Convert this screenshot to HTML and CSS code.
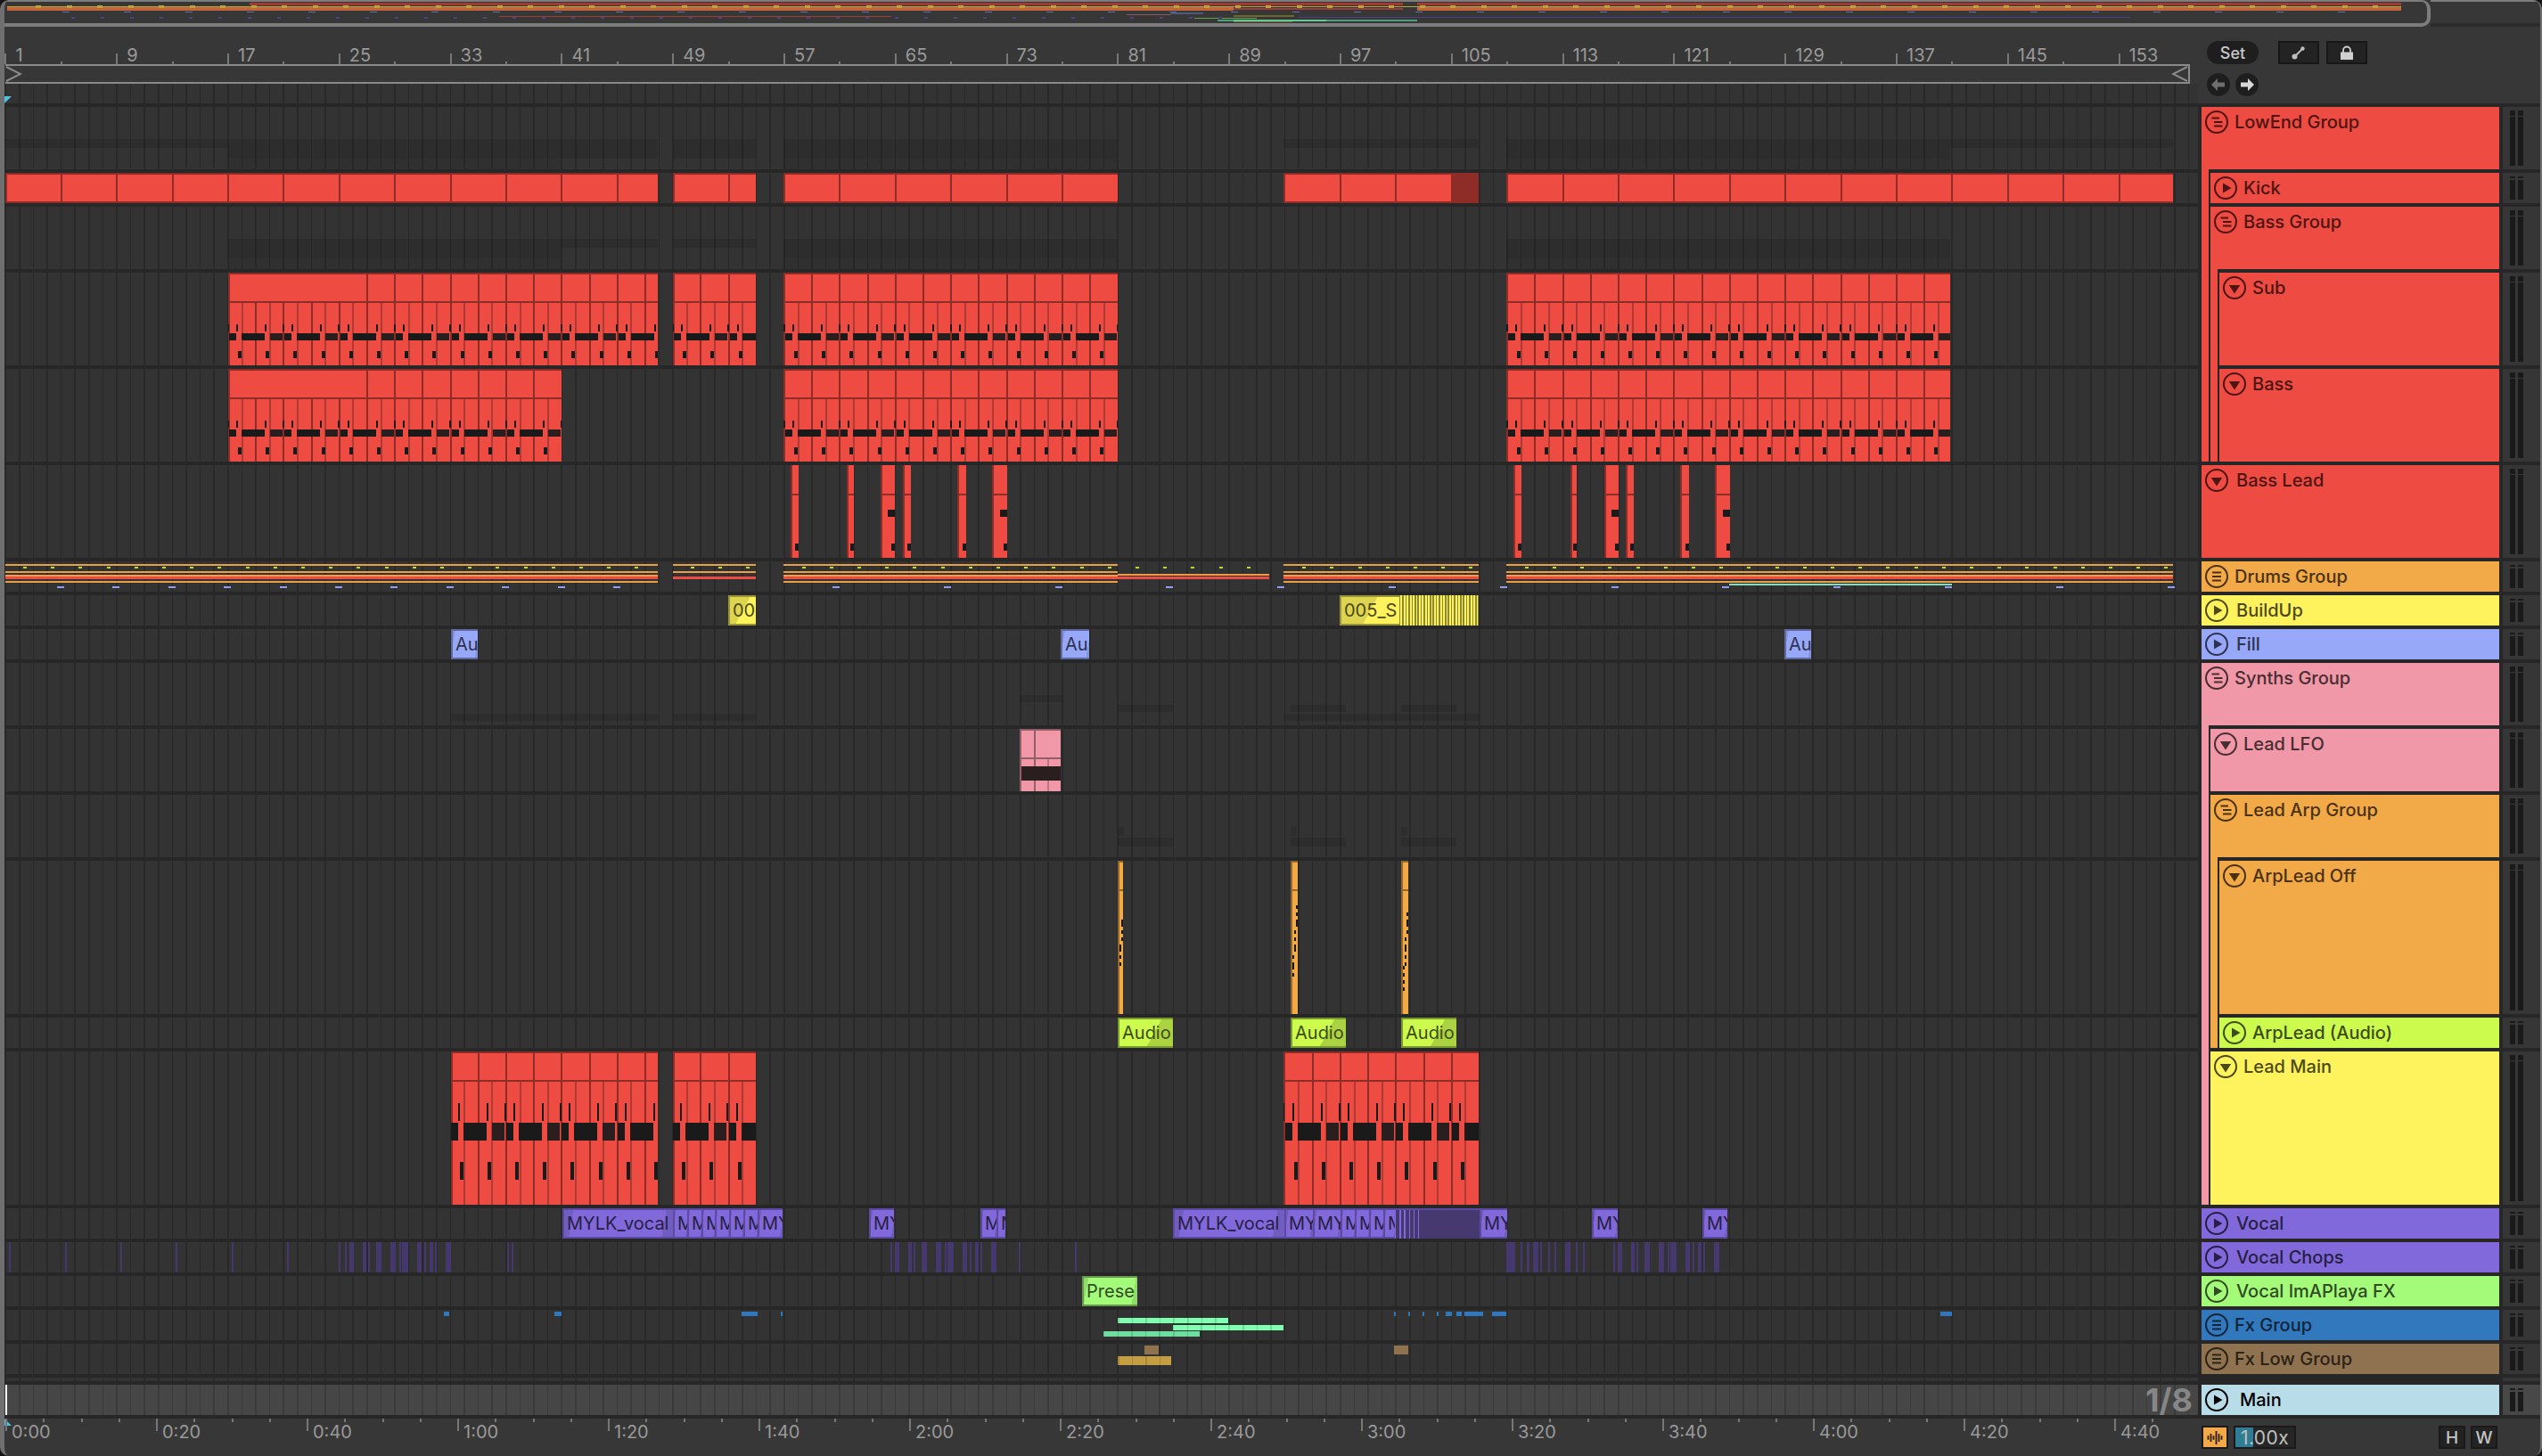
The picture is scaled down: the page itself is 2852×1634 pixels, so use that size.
FILE: index.html
```html
<!DOCTYPE html>
<html lang="en">
<head>
    <meta charset="UTF-8">
    <title>Arrangement</title>
    <link rel="stylesheet" href="styles.css">
</head>
<body>
    <svg class="defs" width="0" height="0">
        <symbol id="i-play" viewBox="0 0 26 26"><circle cx="13" cy="13" r="12" fill="none" stroke="currentColor" stroke-width="2"/><path d="M10 7.5 L19.5 13 L10 18.5 Z" fill="currentColor"/></symbol>
        <symbol id="i-down" viewBox="0 0 26 26"><circle cx="13" cy="13" r="12" fill="none" stroke="currentColor" stroke-width="2"/><path d="M6.8 10 H19.2 L13 19.5 Z" fill="currentColor"/></symbol>
        <symbol id="i-open" viewBox="0 0 26 26"><circle cx="13" cy="13" r="12" fill="none" stroke="currentColor" stroke-width="2"/><path d="M7.5 8.6 H16 M10 13 H19.5 M10 17.4 H19.5" stroke="currentColor" stroke-width="2" fill="none"/></symbol>
        <symbol id="i-fold" viewBox="0 0 26 26"><circle cx="13" cy="13" r="12" fill="none" stroke="currentColor" stroke-width="2"/><path d="M8 8.6 H18 M8 13 H18 M8 17.4 H18" stroke="currentColor" stroke-width="2" fill="none"/></symbol>
    </svg>

    <div class="app">
        <div class="overview" id="overview">
            <div class="viewport"></div>
            <div class="overview-rest"></div>
        </div>

        <div class="top">
            <div class="time-col">
                <div class="ruler" id="ruler"></div>
                <div class="locators">
                    <svg class="brace" width="19" height="18" viewBox="0 0 19 18"><path d="M1 1 L17 9 L1 17" fill="none" stroke="#8a8a8a" stroke-width="2"/></svg>
                    <svg class="brace" width="19" height="18" viewBox="0 0 19 18"><path d="M18 1 L2 9 L18 17" fill="none" stroke="#8a8a8a" stroke-width="2"/></svg>
                </div>
                <div class="lane marker"><div class="start-flag"></div></div>
            </div>
            <div class="controls">
                <div class="ctl-row">
                    <button class="pill">Set</button>
                    <div class="squares">
                        <button class="square"><svg width="16" height="16" viewBox="0 0 16 16"><path d="M3 13 L13 3" stroke="#bdbdbd" stroke-width="2"/><circle cx="3.5" cy="12.5" r="3" fill="#bdbdbd"/><circle cx="12.5" cy="3.5" r="2.2" fill="#bdbdbd"/></svg></button>
                        <button class="square"><svg width="16" height="16" viewBox="0 0 16 16"><path d="M4 8 V5.5 a4 4 0 0 1 8 0 V8" fill="none" stroke="#d0d0d0" stroke-width="1.8"/><rect x="1" y="7.5" width="14" height="8.5" fill="#d0d0d0"/></svg></button>
                    </div>
                </div>
                <div class="ctl-row arrows">
                    <button class="round"><svg width="16" height="14" viewBox="0 0 16 14"><path d="M7 0 L0 7 L7 14 V9.5 H15 V4.5 H7 Z" fill="#6e6e6e"/></svg></button>
                    <button class="round"><svg width="16" height="14" viewBox="0 0 16 14"><path d="M9 0 L16 7 L9 14 V9.5 H1 V4.5 H9 Z" fill="#d8d8d8"/></svg></button>
                </div>
            </div>
        </div>

        <div class="tracks">
            <div class="row h70">
                <div class="lane" data-l="lowend"></div>
                <div class="head"><div class="body c-red"><svg class="ic"><use href="#i-open"/></svg><span class="name">LowEnd Group</span></div></div>
                <div class="meter tall"><i></i><i></i></div>
            </div>
            <div class="row h34">
                <div class="lane" data-l="kick"></div>
                <div class="head"><b class="strip c-red"></b><div class="body c-red"><svg class="ic"><use href="#i-play"/></svg><span class="name">Kick</span></div></div>
                <div class="meter"><i></i><i></i></div>
            </div>
            <div class="row h70">
                <div class="lane" data-l="bassgroup"></div>
                <div class="head"><b class="strip c-red"></b><div class="body c-red"><svg class="ic"><use href="#i-open"/></svg><span class="name">Bass Group</span></div></div>
                <div class="meter tall"><i></i><i></i></div>
            </div>
            <div class="row h104">
                <div class="lane" data-l="sub"></div>
                <div class="head"><b class="strip c-red"></b><b class="strip c-red"></b><div class="body c-red"><svg class="ic"><use href="#i-down"/></svg><span class="name">Sub</span></div></div>
                <div class="meter tall"><i></i><i></i></div>
            </div>
            <div class="row h104">
                <div class="lane" data-l="bass"></div>
                <div class="head"><b class="strip c-red"></b><b class="strip c-red"></b><div class="body c-red"><svg class="ic"><use href="#i-down"/></svg><span class="name">Bass</span></div></div>
                <div class="meter tall"><i></i><i></i></div>
            </div>
            <div class="row h104">
                <div class="lane" data-l="basslead"></div>
                <div class="head"><div class="body c-red"><svg class="ic"><use href="#i-down"/></svg><span class="name wide">Bass Lead</span></div></div>
                <div class="meter tall"><i></i><i></i></div>
            </div>
            <div class="row h34">
                <div class="lane" data-l="drums"></div>
                <div class="head"><div class="body c-orange"><svg class="ic"><use href="#i-fold"/></svg><span class="name">Drums Group</span></div></div>
                <div class="meter"><i></i><i></i></div>
            </div>
            <div class="row h34">
                <div class="lane" data-l="buildup"></div>
                <div class="head"><div class="body c-yellow"><svg class="ic"><use href="#i-play"/></svg><span class="name wide">BuildUp</span></div></div>
                <div class="meter"><i></i><i></i></div>
            </div>
            <div class="row h34">
                <div class="lane" data-l="fill"></div>
                <div class="head"><div class="body c-peri"><svg class="ic"><use href="#i-play"/></svg><span class="name wide">Fill</span></div></div>
                <div class="meter"><i></i><i></i></div>
            </div>
            <div class="row h70">
                <div class="lane" data-l="synths"></div>
                <div class="head"><div class="body c-pink"><svg class="ic"><use href="#i-open"/></svg><span class="name">Synths Group</span></div></div>
                <div class="meter tall"><i></i><i></i></div>
            </div>
            <div class="row h70">
                <div class="lane" data-l="leadlfo"></div>
                <div class="head"><b class="strip c-pink"></b><div class="body c-pink"><svg class="ic"><use href="#i-down"/></svg><span class="name">Lead LFO</span></div></div>
                <div class="meter tall"><i></i><i></i></div>
            </div>
            <div class="row h70">
                <div class="lane" data-l="leadarp"></div>
                <div class="head"><b class="strip c-pink"></b><div class="body c-orange"><svg class="ic"><use href="#i-open"/></svg><span class="name">Lead Arp Group</span></div></div>
                <div class="meter tall"><i></i><i></i></div>
            </div>
            <div class="row h172">
                <div class="lane" data-l="arpoff"></div>
                <div class="head"><b class="strip c-pink"></b><b class="strip c-orange"></b><div class="body c-orange"><svg class="ic"><use href="#i-down"/></svg><span class="name">ArpLead Off</span></div></div>
                <div class="meter tall"><i></i><i></i></div>
            </div>
            <div class="row h34">
                <div class="lane" data-l="arpaudio"></div>
                <div class="head"><b class="strip c-pink"></b><b class="strip c-orange"></b><div class="body c-lime"><svg class="ic"><use href="#i-play"/></svg><span class="name">ArpLead (Audio)</span></div></div>
                <div class="meter"><i></i><i></i></div>
            </div>
            <div class="row h172">
                <div class="lane" data-l="leadmain"></div>
                <div class="head"><b class="strip c-pink"></b><div class="body c-yellow"><svg class="ic"><use href="#i-down"/></svg><span class="name">Lead Main</span></div></div>
                <div class="meter tall"><i></i><i></i></div>
            </div>
            <div class="row h34">
                <div class="lane" data-l="vocal"></div>
                <div class="head"><div class="body c-purple"><svg class="ic"><use href="#i-play"/></svg><span class="name wide">Vocal</span></div></div>
                <div class="meter"><i></i><i></i></div>
            </div>
            <div class="row h34">
                <div class="lane" data-l="chops"></div>
                <div class="head"><div class="body c-purple"><svg class="ic"><use href="#i-play"/></svg><span class="name wide">Vocal Chops</span></div></div>
                <div class="meter"><i></i><i></i></div>
            </div>
            <div class="row h34">
                <div class="lane" data-l="imaplaya"></div>
                <div class="head"><div class="body c-green"><svg class="ic"><use href="#i-play"/></svg><span class="name wide">Vocal ImAPlaya FX</span></div></div>
                <div class="meter"><i></i><i></i></div>
            </div>
            <div class="row h34">
                <div class="lane" data-l="fx"></div>
                <div class="head"><div class="body c-blue"><svg class="ic"><use href="#i-fold"/></svg><span class="name">Fx Group</span></div></div>
                <div class="meter"><i></i><i></i></div>
            </div>
            <div class="row h34">
                <div class="lane" data-l="fxlow"></div>
                <div class="head"><div class="body c-brown"><svg class="ic"><use href="#i-fold"/></svg><span class="name">Fx Low Group</span></div></div>
                <div class="meter"><i></i><i></i></div>
            </div>
            <div class="row drop">
                <div class="lane"></div>
                <div class="head"></div>
                <div class="meter blank"></div>
            </div>
            <div class="row h34 main-row">
                <div class="lane main-lane"><div class="playhead"></div><span class="grid-size">1/8</span></div>
                <div class="head"><div class="body c-main"><svg class="ic"><use href="#i-play"/></svg><span class="name widest">Main</span></div></div>
                <div class="meter"><i></i><i></i></div>
            </div>
        </div>

        <div class="bottom">
            <div class="time-ruler" id="time-ruler"><div class="end-flag"></div></div>
            <div class="bottom-ctl">
                <button class="wave"><svg width="20" height="15" viewBox="0 0 24 20"><path d="M2 7 V13 M6 4 V16 M10 7 V13 M14 0 V20 M18 4 V16 M22 7 V13" stroke="#2a1c08" stroke-width="2.4"/></svg></button>
                <div class="speed"><span class="speed-fill"></span><span class="speed-text">1.00x</span></div>
                <div class="spacer"></div>
                <button class="letter">H</button>
                <button class="letter">W</button>
            </div>
        </div>
    </div>
    <script src="script.js"></script>
</body>
</html>
```
FILE: styles.css
```css
* {
    margin: 0;
    padding: 0;
    box-sizing: border-box;
    font-family: Inter, "Liberation Sans", sans-serif;
}

body {
    background-color: #161616;
    width: 2852px;
    height: 1634px;
    overflow: hidden;
}

.defs {
    position: absolute;
}

button {
    border: none;
    display: flex;
    align-items: center;
    justify-content: center;
}

.app {
    width: 2852px;
    height: 1634px;
    background-color: #373737;
    border-left: 5px solid #6f6f6f;
    border-right: 2px solid #6f6f6f;
    border-radius: 10px;
    overflow: hidden;
    display: flex;
    flex-direction: column;
}

/* overview strip */
.overview {
    height: 30px;
    position: relative;
    flex-shrink: 0;
}

.viewport {
    position: absolute;
    left: -5px;
    top: 0;
    width: 2727px;
    height: 30px;
    border: solid #7d7d7d;
    border-width: 2px 4px 4px 0;
    border-radius: 0 10px 10px 0;
}

.overview-rest {
    position: absolute;
    left: 2722px;
    right: 0;
    top: 0;
    height: 30px;
    border-top: 2px solid #7d7d7d;
    border-bottom: 4px solid #2c2c2c;
}

.r {
    position: absolute;
}

.ov-red { background-color: #a03a34; }
.ov-yellow { background-color: #b7a53c; }
.ov-orange { background-color: #c2653a; }
.ov-blue { background-color: #5d6fb0; }
.ov-pink { background-color: #8a5a62; }
.ov-slate { background-color: #4e5a78; }
.ov-purple { background-color: #4c4285; }
.ov-olive { background-color: #6b6a2c; }
.ov-green { background-color: #63a34f; }
.ov-teal { background-color: #4f9d7a; }
.ov-mint { background-color: #63c792; }
.ov-brown { background-color: #7d6544; }

/* top area */
.top {
    height: 86px;
    display: flex;
    flex-shrink: 0;
}

.time-col {
    width: 2461px;
    flex-shrink: 0;
    display: flex;
    flex-direction: column;
}

.ruler {
    height: 42px;
    position: relative;
}

.tick {
    position: absolute;
    bottom: 0;
    width: 2px;
    height: 12px;
    background-color: #777;
}

.tick.small {
    height: 3px;
}

.bar-label {
    position: absolute;
    top: 22px;
    font-size: 20px;
    line-height: 20px;
    color: #999;
}

.locators {
    height: 22px;
    width: 2451px;
    margin-left: 1px;
    border: solid #8a8a8a;
    border-width: 2px 2px 2px 0;
    display: flex;
    justify-content: space-between;
    align-items: center;
}

.marker {
    height: 22px;
    flex-shrink: 0;
}

.start-flag {
    position: absolute;
    left: 0;
    top: 14px;
    border-top: 8px solid #4fc3dd;
    border-right: 8px solid transparent;
}

.controls {
    padding: 16px 0 0 10px;
}

.ctl-row {
    display: flex;
    gap: 22px;
}

.arrows {
    margin-top: 10px;
    gap: 6px;
}

.squares {
    display: flex;
    gap: 8px;
}

.pill {
    width: 58px;
    height: 26px;
    border-radius: 13px;
    background-color: #1e1e1e;
    color: #c9c9c9;
    font-size: 18px;
    font-weight: 500;
}

.square {
    width: 46px;
    height: 26px;
    background-color: #232323;
    border: 2px solid #171717;
}

.round {
    width: 26px;
    height: 26px;
    border-radius: 50%;
    background-color: #1e1e1e;
}

/* tracks */
.tracks {
    margin-top: 0;
    padding-top: 4px;
    background-color: #272727;
    display: flex;
    flex-direction: column;
    gap: 4px;
    padding-bottom: 4px;
    flex-shrink: 0;
}

.row {
    display: flex;
    gap: 4px;
    flex-shrink: 0;
}

.h34 { height: 34px; }
.h70 { height: 70px; }
.h104 { height: 104px; }
.h172 { height: 172px; }
.drop { height: 4px; }

.lane {
    position: relative;
    width: 2461px;
    flex-shrink: 0;
    overflow: hidden;
    background-color: #333;
    background-image: repeating-linear-gradient(90deg, transparent 0 .4px, #292929 .4px 2px, transparent 2px 15.6px);
}

.main-lane {
    background-color: #464646;
    background-image: repeating-linear-gradient(90deg, transparent 0 .4px, #3a3a3a .4px 2px, transparent 2px 15.6px);
}

.playhead {
    position: absolute;
    left: 1px;
    top: 0;
    width: 2px;
    height: 34px;
    background-color: #fff;
}

.grid-size {
    position: absolute;
    right: 6px;
    top: -1px;
    font-size: 36px;
    line-height: 36px;
    font-weight: 700;
    color: #868686;
}

.head {
    width: 334px;
    flex-shrink: 0;
    display: flex;
}

.strip {
    width: 10px;
    margin-top: -4px;
    flex-shrink: 0;
    background-color: var(--c);
    border-right: 2px solid #272727;
}

.body {
    flex-grow: 1;
    display: flex;
    align-items: flex-start;
    padding: 4px 0 0 4px;
    background-color: var(--c);
    color: var(--ink);
}

.ic {
    width: 26px;
    height: 26px;
    flex-shrink: 0;
}

.name {
    font-size: 20px;
    line-height: 26px;
    font-weight: 500;
    margin-left: 7px;
    white-space: nowrap;
}

.name.wide { margin-left: 9px; }
.name.widest { margin-left: 13px; }

.c-red { --c: #ee4b42; --ink: #4d1512; --edge: #8e2d28; --thin: #ab3b34; }
.c-orange { --c: #f2a947; --ink: #4a3210; --edge: #94672a; --thin: #c98a38; }
.c-yellow { --c: #fef35c; --ink: #4c4919; --edge: #9a9438; --thin: #c9c14a; }
.c-peri { --c: #97a8f9; --ink: #2d3250; --edge: #5f6aa0; --thin: #7a88c9; }
.c-pink { --c: #f098a8; --ink: #482d32; --edge: #935e68; --thin: #b87582; }
.c-lime { --c: #ccfb4e; --ink: #3d4b18; --edge: #7a9a30; --thin: #a5cc40; }
.c-purple { --c: #8169db; --ink: #271f43; --edge: #5a4aa0; --thin: #6a57b5; }
.c-green { --c: #a4fb7a; --ink: #314b25; --edge: #659a4c; --thin: #85cc63; }
.c-blue { --c: #3278bc; --ink: #0f243a; }
.c-brown { --c: #8f7250; --ink: #2b2218; }
.c-main { --c: #b8dde8; --ink: #000; }

.meter {
    width: 42px;
    flex-shrink: 0;
    background-color: #363636;
    padding: 4px 0 4px 8px;
    display: flex;
    gap: 3px;
}

.meter i {
    width: 6px;
    background-image: linear-gradient(#1a1a1a 0 2px, transparent 2px 4px, #1a1a1a 4px);
}

.meter.tall i {
    background-image: linear-gradient(#1a1a1a 0 6px, transparent 6px 7px, #1a1a1a 7px);
}

.main-row .meter {
    background-color: #484848;
}

.meter.blank {
    background-color: #363636;
    padding: 0;
}

/* clips */
.midi {
    background-color: var(--c);
    overflow: hidden;
}

.edge { background-color: var(--edge); }
.thin { background-color: var(--thin); }
.note { background-color: #1b1a1a; }
.note.soft { background-color: #2a1f1e; }
.dead { background-color: #8e2d28; }

.ghost { background-color: rgba(0, 0, 0, .1); }
.ghost.light { background-color: rgba(0, 0, 0, .05); }

.ln-orange { background-color: #e89f45; }
.ln-red { background-color: #ee4b42; }
.ln-dot { background-color: #b9d83a; }
.ln-blue { background-color: #8f9ff0; }
.ln-teal { background-color: #7fe0c0; }

.stripe-dim { background-color: #44386f; }
.fx-blue { background-color: #2f78bd; }
.fx-mint { background-color: #7fffb0; }
.fx-mint.dim { background-color: #6fdca0; }
.fx-brown { background-color: #8f7250; }
.fx-gold { background-color: #c49e42; }

.fx-mint, .fx-gold {
    background-image: repeating-linear-gradient(90deg, rgba(0, 0, 0, .14) 0 1.5px, transparent 1.5px 15.6px);
}

.audio {
    border: 2px solid var(--edge);
    background-color: var(--c);
    color: var(--ink);
    font-size: 20px;
    line-height: 30px;
    padding-left: 3px;
    overflow: hidden;
    white-space: nowrap;
    height: 34px;
}

.audio.cut-right {
    border-right: none;
}

.wedge-right {
    background-image: linear-gradient(118deg, transparent 62%, rgba(0, 0, 0, .16) 62%);
}

.wedge-left {
    background-image: linear-gradient(118deg, rgba(0, 0, 0, .13) 50%, transparent 50%);
}

.wedge-both {
    background-image: linear-gradient(100deg, rgba(0, 0, 0, .12) 8%, transparent 8%, transparent 90%, rgba(0, 0, 0, .12) 90%);
}

.vocal-dark {
    background-color: #46396f;
    border-top: 2px solid #5a4aa0;
    height: 34px;
    overflow: hidden;
}

.vocal-bits {
    background-image: repeating-linear-gradient(90deg, #8169db 0 1.5px, transparent 1.5px 5.2px);
}

.yellow-bits {
    background-image: repeating-linear-gradient(90deg, #8b8733 0 1.5px, transparent 1.5px 3.4px);
    background-color: #fef35c;
}

/* bottom */
.bottom {
    flex-grow: 1;
    display: flex;
}

.time-ruler {
    width: 2461px;
    flex-shrink: 0;
    position: relative;
}

.time-ruler .tick {
    top: 0;
    bottom: auto;
    height: 14px;
}

.time-ruler .tick.small {
    height: 4px;
    width: 2px;
}

.time-label {
    position: absolute;
    top: 5px;
    font-size: 20px;
    line-height: 20px;
    color: #999;
}

.end-flag {
    position: absolute;
    left: 0;
    top: 0;
    border-bottom: 8px solid #4fc3dd;
    border-right: 8px solid transparent;
}

.bottom-ctl {
    flex-grow: 1;
    display: flex;
    align-items: flex-start;
    padding: 8px 0 0 4px;
}

.wave {
    width: 30px;
    height: 26px;
    background-color: #f2a947;
    border: 2px solid #1a1a1a;
}

.speed {
    width: 70px;
    height: 26px;
    margin-left: 6px;
    background-color: #262626;
    border: 2px solid #1a1a1a;
    position: relative;
    display: flex;
    align-items: center;
}

.speed-fill {
    position: absolute;
    left: 0;
    top: 0;
    bottom: 0;
    width: 20px;
    background-color: #2f7d94;
}

.speed-text {
    position: relative;
    margin-left: 6px;
    font-size: 21px;
    letter-spacing: .4px;
    color: #c0c0c0;
}

.spacer {
    flex-grow: 1;
}

.letter {
    width: 30px;
    height: 26px;
    margin-right: 6px;
    background-color: #232323;
    border: 2px solid #1a1a1a;
    color: #c4c4c4;
    font-size: 19px;
    font-weight: 500;
}

.letter:last-child {
    margin-right: 48px;
}
```
FILE: script.js
```js
const BAR = 15.6;
const barX = (b) => 6.4 + (b - 1) * BAR;
const lane = (name) => document.querySelector(`[data-l="${name}"]`);

function rect(parent, x, y, w, h, cls) {
    const d = document.createElement("div");
    d.className = `r ${cls}`;
    d.style.left = `${x}px`;
    d.style.top = `${y}px`;
    d.style.width = `${w}px`;
    d.style.height = `${h}px`;
    parent.appendChild(d);
    return d;
}

// x here is a page x, lanes start at 5
function laneRect(name, x1, x2, y, h, cls) {
    return rect(lane(name), x1 - 5, y, x2 - x1, h, cls);
}

function midiClip(name, x1, x2, height, color) {
    return rect(lane(name), x1 - 5, 0, x2 - x1, height, `midi ${color}`);
}

function barLines(clip, x1, x2, height, o) {
    for (let b = 1; barX(b) < x2; b++) {
        const x = barX(b);
        if (x <= x1 + 2) continue;
        const rel = x - x1 - 1;
        if ((b - 1) % 2 === 0) {
            rect(clip, rel, o.header, 2, height - o.header, "edge");
            if (x >= (o.headFrom || 0)) rect(clip, rel, 0, 2, o.header, "edge");
        } else {
            rect(clip, rel, o.header, 2, height - o.header, "thin");
        }
    }
}

function clipFrame(clip, w, height, header) {
    rect(clip, 0, 0, w, 2, "edge");
    rect(clip, 0, 0, 2, height, "edge");
    rect(clip, 0, header, w, 2, "edge");
}

const PATTERN_UP = [8, 40, 60];
const PATTERN_MID = [[0, 8], [14, 40], [46, 60]];

function notes(clip, x1, x2, rows, shift) {
    for (let p = barX(1) + shift; p < x2; p += BAR * 4) {
        PATTERN_UP.forEach((s) => rect(clip, p + s - x1, rows.up[0], 2, rows.up[1], "note"));
        PATTERN_MID.forEach((m, i) => {
            rect(clip, p + m[0] - x1, rows.mid[0], m[1] - m[0], rows.mid[1], i === 2 ? "note soft" : "note");
        });
        rect(clip, p + 10 - x1, rows.low[0], 4, rows.low[1], "note");
        rect(clip, p + BAR * 2 + 10 - x1, rows.low[0], 4, rows.low[1], "note");
    }
}

function fullClip(name, x1, x2, height, color, o) {
    const clip = midiClip(name, x1, x2, height, color);
    barLines(clip, x1, x2, height, o);
    clipFrame(clip, x2 - x1, height, o.header);
    if (o.rows) notes(clip, x1, x2, o.rows, o.shift || 0);
    return clip;
}

/* ---------- ruler ---------- */
const ruler = document.getElementById("ruler");
for (let b = 1; b <= 153; b += 4) {
    const tick = document.createElement("div");
    const major = (b - 1) % 8 === 0;
    tick.className = major ? "tick" : "tick small";
    tick.style.left = `${barX(b) - 6}px`;
    ruler.appendChild(tick);
    if (major) {
        const label = document.createElement("span");
        label.className = "bar-label";
        label.textContent = b;
        label.style.left = `${barX(b) + 6}px`;
        ruler.appendChild(label);
    }
}

const timeRuler = document.getElementById("time-ruler");
for (let t = 0; t <= 285; t += 5) {
    const x = 1 + t * 8.45;
    const tick = document.createElement("div");
    tick.className = t % 20 === 0 ? "tick" : "tick small";
    tick.style.left = `${x}px`;
    timeRuler.appendChild(tick);
    if (t % 20 === 0 && t <= 280) {
        const label = document.createElement("span");
        label.className = "time-label";
        label.textContent = `${Math.floor(t / 60)}:${String(t % 60).padStart(2, "0")}`;
        label.style.left = `${x + 7}px`;
        timeRuler.appendChild(label);
    }
}

/* ---------- overview ---------- */
const overview = document.getElementById("overview");
const ovLines = [
    [280, 1574, 3, 3, "ov-red"], [1590, 2694, 3, 3, "ov-red"],
    [8, 2694, 7, 1, "ov-yellow"], [8, 1384, 8, 4, "ov-orange"], [1384, 1574, 9, 2, "ov-red"], [1590, 2694, 8, 4, "ov-orange"],
    [1264, 1314, 16, 1, "ov-pink"], [1314, 1350, 14, 2, "ov-slate"], [1384, 1452, 17, 2, "ov-olive"],
    [1340, 1410, 20, 1, "ov-green"], [1366, 1590, 22, 2, "ov-teal"], [1384, 1488, 22, 2, "ov-mint"],
    [1384, 1450, 24, 1, "ov-brown"], [1456, 2390, 19, 1, "ov-purple"], [560, 1000, 18, 1, "ov-red"]
];
ovLines.forEach((l) => rect(overview, l[0] - 5, l[2], l[1] - l[0], l[3], l[4]));
for (let x = 70; x < 2690; x += 69) rect(overview, x - 5, 13, 8, 1, "ov-blue");
for (let x = 80; x < 1400; x += 33) rect(overview, x - 5, 19, 4, 2, "ov-purple");
for (let x = 40; x < 2694; x += 34.5) rect(overview, x - 5, 6, 6, 3, "ov-yellow");

/* ---------- kick ---------- */
[[6.4, 738], [755, 848], [879, 1254], [1440, 1628], [1690, 2438]].forEach(([a, b]) => {
    const clip = midiClip("kick", a, b, 34, "c-red");
    rect(clip, 0, 0, b - a, 2, "edge");
    rect(clip, 0, 32, b - a, 2, "edge");
    rect(clip, 0, 0, 2, 34, "edge");
    for (let n = 1; barX(n) < b; n += 4) {
        if (barX(n) > a + 2) rect(clip, barX(n) - a - 1, 0, 2, 34, "edge");
    }
});
laneRect("kick", 1628, 1659, 0, 34, "dead");

/* ---------- bass rows ---------- */
const bassRows = { up: [58, 8], mid: [68, 8], low: [88, 8] };
const bassOpts = { header: 32, rows: bassRows, shift: 1 };
fullClip("sub", 256, 738, 104, "c-red", { ...bassOpts, headFrom: 381 });
fullClip("sub", 755, 848, 104, "c-red", bassOpts);
fullClip("sub", 879, 1254, 104, "c-red", bassOpts);
fullClip("sub", 1690, 2188, 104, "c-red", bassOpts);
fullClip("bass", 256, 630, 104, "c-red", { ...bassOpts, headFrom: 381 });
fullClip("bass", 879, 1254, 104, "c-red", bassOpts);
fullClip("bass", 1690, 2188, 104, "c-red", bassOpts);

/* bass lead stabs, second pass is the first one 52 bars later */
const leadStabs = [[886.6, 896], [950.4, 958], [988.4, 1004.5], [1012.5, 1021.9], [1074, 1084], [1112.5, 1129.5]];
[0, 811.2].forEach((shift) => {
    leadStabs.forEach(([a, b], i) => {
        const clip = midiClip("basslead", a + shift, b + shift, 104, "c-red");
        rect(clip, 0, 0, 2, 104, "edge");
        rect(clip, 0, 32, b - a, 2, "edge");
        if (i === 2 || i === 5) rect(clip, b - a - 8, 50, 8, 8, "note");
        rect(clip, b - a - 4, 88, 4, 8, "note");
    });
});

/* ---------- folded group previews ---------- */
const kickRanges = [[6, 738], [755, 848], [879, 1254], [1440, 1659], [1690, 2438]];
const bassRanges = [[256, 738], [755, 848], [879, 1254], [1690, 2188]];
const bass2Ranges = [[256, 630], [879, 1254], [1690, 2188]];
kickRanges.forEach(([a, b]) => laneRect("lowend", a, b, 36, 10, "ghost"));
bassRanges.forEach(([a, b]) => laneRect("lowend", a, b, 46, 12, "ghost"));
bass2Ranges.forEach(([a, b]) => laneRect("lowend", a, b, 58, 12, "ghost light"));
bassRanges.forEach(([a, b]) => laneRect("bassgroup", a, b, 36, 10, "ghost"));
bass2Ranges.forEach(([a, b]) => laneRect("bassgroup", a, b, 46, 12, "ghost"));
bass2Ranges.forEach(([a, b]) => laneRect("bassgroup", a, b, 58, 12, "ghost light"));
laneRect("synths", 1144, 1192, 36, 8, "ghost");
[[1254, 1316], [1448, 1510], [1572, 1634]].forEach(([a, b]) => {
    laneRect("synths", a, b, 47, 8, "ghost");
    laneRect("leadarp", a, a + 7, 36, 10, "ghost");
    laneRect("leadarp", a, b, 48, 10, "ghost");
});
[[505, 738], [755, 848], [1440, 1659]].forEach(([a, b]) => laneRect("synths", a, b, 57, 8, "ghost"));

/* ---------- drums ---------- */
const fullLines = [3, 11, 15, 22];
[[6, 738], [879, 1254], [1440, 1659], [1690, 2438]].forEach(([a, b]) => {
    fullLines.forEach((y) => laneRect("drums", a, b, y, 2, "ln-orange"));
    laneRect("drums", a, b, 17, 3, "ln-red");
});
[3, 11].forEach((y) => laneRect("drums", 755, 848, y, 2, "ln-orange"));
laneRect("drums", 755, 848, 17, 3, "ln-red");
laneRect("drums", 1254, 1424, 14, 2, "ln-orange");
laneRect("drums", 1254, 1424, 17, 3, "ln-red");
for (let x = 26; x < 2440; x += 31.2) {
    const gap = (x > 738 && x < 755) || (x > 850 && x < 879) || (x > 1424 && x < 1441) || (x > 1660 && x < 1690);
    if (!gap) laneRect("drums", x, x + 4, 6, 2, "ln-dot");
}
for (let x = 64; x < 740; x += 62.4) laneRect("drums", x, x + 8, 28, 2, "ln-blue");
for (let x = 934; x < 2440; x += 124.8) {
    laneRect("drums", x, x + 8, 28, 2, "ln-blue");
}
laneRect("drums", 1940, 2190, 25, 2, "ln-teal");

/* ---------- audio clips ---------- */
function audioClip(name, x1, x2, text, color, wedge) {
    const clip = laneRect(name, x1, x2, 0, 34, `audio cut-right ${color} ${wedge}`);
    clip.textContent = text;
    return clip;
}

audioClip("buildup", 817, 848, "00", "c-yellow", "wedge-left");
audioClip("buildup", 1503, 1570, "005_S", "c-yellow", "wedge-left");
laneRect("buildup", 1570, 1659, 0, 34, "yellow-bits");
audioClip("fill", 506, 536, "Au", "c-peri", "wedge-both");
audioClip("fill", 1190, 1222, "Au", "c-peri", "wedge-both");
audioClip("fill", 2002, 2032, "Au", "c-peri", "wedge-both");
audioClip("arpaudio", 1254, 1316, "Audio", "c-lime", "wedge-right");
audioClip("arpaudio", 1448, 1510, "Audio", "c-lime", "wedge-right");
audioClip("arpaudio", 1572, 1634, "Audio", "c-lime", "wedge-right");
audioClip("imaplaya", 1214, 1276, "Prese", "c-green", "wedge-both");

/* vocal slices, wide ones show more of the name */
const vocalClips = [
    [631, 755, "MYLK_vocal"], [755, 771, "M"], [771, 787, "M"], [787, 802, "M"], [802, 818, "M"],
    [818, 834, "M"], [834, 850, "M"], [850, 878, "MY"], [975, 1003, "MY"], [1100, 1118, "M"], [1118, 1128, "M"],
    [1316, 1441, "MYLK_vocal"], [1441, 1473, "MY"], [1473, 1504, "MY"], [1504, 1520, "M"], [1520, 1536, "M"],
    [1536, 1552, "M"], [1552, 1565, "M"], [1660, 1691, "MY"], [1786, 1815, "MY"], [1910, 1938, "MY"]
];
vocalClips.forEach(([a, b, t]) => audioClip("vocal", a, b, t, "c-purple", "wedge-both"));
laneRect("vocal", 1565, 1660, 0, 34, "vocal-dark");
laneRect("vocal", 1565, 1596, 2, 32, "vocal-bits");

/* ---------- lead lfo and arps ---------- */
const lfo = midiClip("leadlfo", 1144, 1190, 70, "c-pink");
barLines(lfo, 1144, 1190, 70, { header: 32 });
clipFrame(lfo, 46, 70, 32);
rect(lfo, 2, 42, 44, 16, "note soft");

const arpNotes = [
    [1254, [[4, 396, 420], [4, 432, 444], [4, 456, 468], [2, 480, 504], [2, 516, 528], [2, 540, 552]]],
    [1448, [[6, 348, 360], [6, 372, 384], [6, 396, 420], [4, 432, 444], [4, 456, 468], [4, 480, 504], [2, 516, 528], [2, 540, 564], [2, 576, 588]]],
    [1572, [[6, 372, 384], [6, 396, 420], [6, 432, 444], [4, 456, 468], [4, 480, 504], [4, 516, 528], [4, 540, 552], [2, 552, 564], [2, 576, 588], [2, 600, 612], [2, 624, 636]]]
];
arpNotes.forEach(([x, list], i) => {
    const w = i === 0 ? 6 : 8;
    const clip = midiClip("arpoff", x, x + w, 172, "c-orange");
    rect(clip, 0, 0, w, 2, "edge");
    rect(clip, 0, 0, 2, 172, "edge");
    rect(clip, 0, 32, w, 2, "edge");
    list.forEach(([rx, v1, v2]) => rect(clip, rx, 900 + v1 / 3 - 966, 2, (v2 - v1) / 3, "note"));
});

/* ---------- lead main ---------- */
const leadOpts = { header: 32, rows: { up: [58, 20], mid: [80, 20], low: [124, 20] } };
fullClip("leadmain", 505.6, 738, 172, "c-red", leadOpts);
fullClip("leadmain", 755, 848, 172, "c-red", leadOpts);
fullClip("leadmain", 1440, 1659, 172, "c-red", leadOpts);

/* ---------- vocal chops ---------- */
const chopSingles = [10, 73, 135, 197, 260, 322, 380, 569, 574, 1143, 1206];
const chopCluster = [[387, 389], [392, 397], [407, 411], [413, 415], [422, 428], [438, 444], [448, 450], [451, 458], [468, 473], [476, 478], [482, 486], [488, 490], [500, 506]];
const chopCluster2 = [[1690, 1700], [1706, 1708], [1713, 1716], [1720, 1726], [1728, 1730], [1737, 1739], [1744, 1746], [1756, 1762], [1768, 1770], [1776, 1778]];
chopSingles.forEach((x) => laneRect("chops", x, x + 2, 0, 34, "stripe-dim"));
chopCluster.forEach(([a, b]) => laneRect("chops", a, b, 0, 34, "stripe-dim"));
chopCluster.forEach(([a, b]) => laneRect("chops", a + 612, b + 612, 0, 34, "stripe-dim"));
chopCluster.forEach(([a, b]) => laneRect("chops", a + 1423, b + 1423, 0, 34, "stripe-dim"));
chopCluster2.forEach(([a, b]) => laneRect("chops", a, b, 0, 34, "stripe-dim"));

/* ---------- fx ---------- */
const fxBlue = [[498, 504], [622, 630], [832, 850], [876, 878], [1564, 1566], [1580, 1582], [1596, 1598], [1612, 1614], [1622, 1629], [1634, 1640], [1643, 1664], [1674, 1690], [2177, 2190]];
fxBlue.forEach(([a, b]) => laneRect("fx", a, b, 2, 5, "fx-blue"));
laneRect("fx", 1254, 1378, 9, 6, "fx-mint");
laneRect("fx", 1316, 1440, 17, 6, "fx-mint");
laneRect("fx", 1238, 1346, 24, 6, "fx-mint dim");
laneRect("fxlow", 1284, 1300, 2, 10, "fx-brown");
laneRect("fxlow", 1564, 1580, 2, 10, "fx-brown");
laneRect("fxlow", 1254, 1314, 14, 10, "fx-gold");
```
